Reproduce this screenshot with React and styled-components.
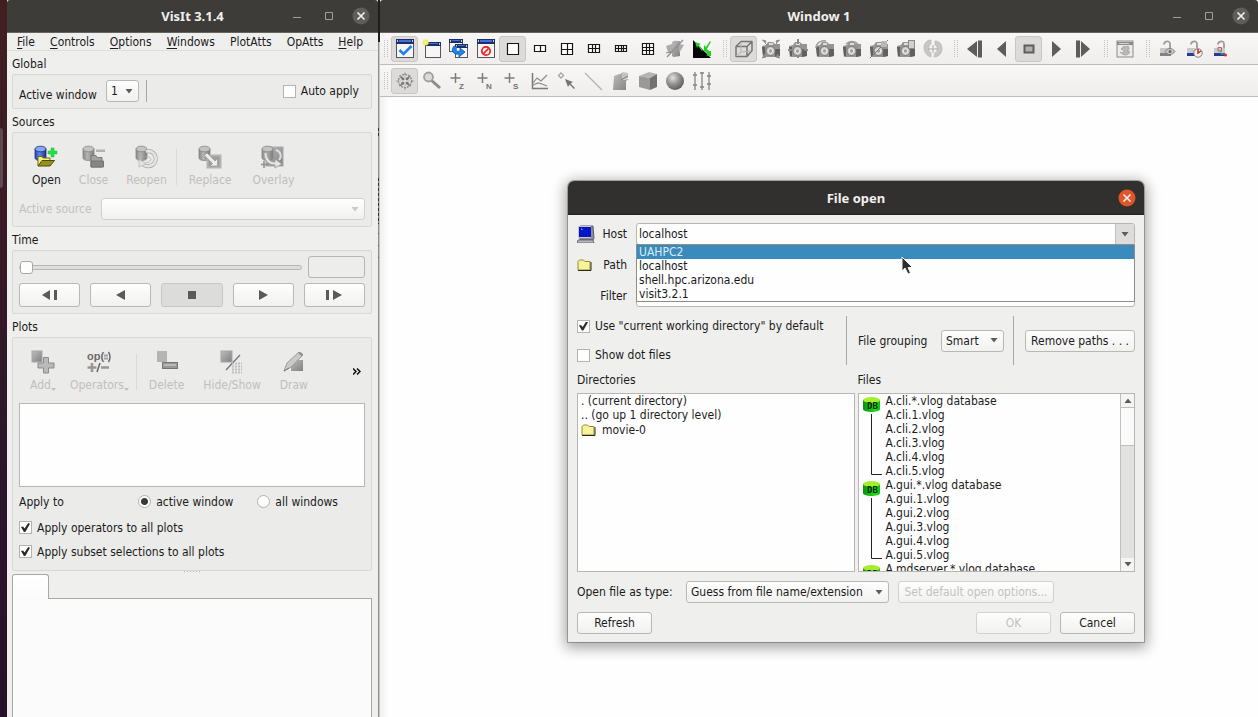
import React from 'react'
import styled, { createGlobalStyle, css } from 'styled-components';

const GlobalStyle = createGlobalStyle`
  * { box-sizing: border-box; }
  body {
    margin: 0;
    overflow: hidden;
    font-family: "DejaVu Sans Condensed", "DejaVu Sans", sans-serif;
    font-size: 12px;
    line-height: 14px;
    color: #1b1b1b;
  }
  button, input, select { font: inherit; color: inherit; margin: 0; }
  ul { list-style: none; margin: 0; padding: 0; }
  svg { display: block; flex: none; }
`;

/* ---------- desktop and window frames ---------- */

const Desktop = styled.div`
  display: flex;
  height: 100vh;
  background: #fefefe;
`;

const Launcher = styled.div`
  flex: 0 0 7px;
  background: linear-gradient(#40201f, #3a1a26 30%, #2b172b 60%, #25122a);
`;

const LauncherMark = styled.div`
  width: 3px;
  height: 60px;
  margin-top: 128px;
  border-radius: 0 3px 3px 0;
  background: #5f4650;
`;

const ControlWindow = styled.section`
  flex: 0 0 371px;
  min-width: 0;
  display: flex;
  flex-direction: column;
  background: #efefee;
`;

const WindowEdge = styled.div`
  flex: 0 0 2px;
  background:
    repeating-linear-gradient(#333 0 3px, transparent 3px 5px) 0 128px / 1px 9px no-repeat,
    repeating-linear-gradient(#333 0 3px, transparent 3px 5px) 0 178px / 1px 46px no-repeat,
    repeating-linear-gradient(#555 0 1px, transparent 1px 12px) 0 233px / 1px 36px no-repeat,
    linear-gradient(#1f1e1c 0 42px, transparent 42px),
    linear-gradient(90deg, #8e8e8c 0 1px, #c8c8c5 1px);
`;

const ViewWindow = styled.section`
  flex: 1;
  min-width: 0;
  display: flex;
  flex-direction: column;
  position: relative;
`;

const Canvas = styled.div`
  flex: 1;
  background: linear-gradient(90deg, #f1f0ee, #fefefe 9px);
`;

const TitleBar = styled.header`
  flex: none;
  display: grid;
  grid-template-columns: 1fr auto 1fr;
  align-items: center;
  height: ${p => (p.$dialog ? 34 : 33)}px;
  padding: 0 1px;
  background: ${p => (p.$dialog ? '#31302e' : '#3d3c39')};
  border-bottom: 1px solid ${p => (p.$dialog ? '#232220' : '#66645f')};
  border-radius: ${p => (p.$dialog ? '6px 6px 0 0' : '3px 3px 0 0')};
`;

const Title = styled.h1`
  grid-column: 2;
  margin: 0;
  font-family: "Noto Sans", sans-serif;
  font-size: 13px;
  line-height: 18px;
  font-weight: 700;
  color: #f1f0ee;
`;

const TitleButtons = styled.div`
  display: flex;
  justify-content: flex-end;
`;

const TitleButton = styled.button`
  width: 32px;
  height: 26px;
  padding: 0;
  border: 0;
  background: none;
  display: grid;
  place-items: center;
`;

/* ---------- shared controls ---------- */

const face = css`
  border: 1px solid ${p => (p.disabled ? '#d2d1cf' : '#b9b8b5')};
  border-radius: 3px;
  background: linear-gradient(#fefefe, #f1f1f0);
`;

const PushButton = styled.button`
  ${face}
  height: 22px;
  min-width: ${p => p.$min || 0}px;
  padding: 0 4px;
  white-space: nowrap;
  color: ${p => (p.disabled ? '#c3c2c0' : '#1b1b1b')};
`;

const SelectBox = styled.span`
  display: inline-grid;
  align-items: center;
  flex: ${p => (p.$grow ? 1 : 'none')};
  width: ${p => (p.$width ? p.$width + 'px' : 'auto')};
  > * { grid-area: 1 / 1; }
  > svg { justify-self: end; margin-right: 6px; pointer-events: none; }
`;

const Select = styled.select`
  ${face}
  appearance: none;
  width: 100%;
  height: 22px;
  padding: 0 4px;
  opacity: 1;
`;

const Check = styled.input.attrs({ type: 'checkbox' })`
  appearance: none;
  flex: none;
  width: 13px;
  height: 13px;
  border: 1px solid #b4b3b0;
  background: #fefefe;
  display: grid;
  place-items: center;
  &:checked::before {
    content: '';
    width: 9px;
    height: 9px;
    background: #2c2c2c;
    clip-path: polygon(0 45%, 22% 38%, 40% 62%, 80% 0, 100% 8%, 48% 100%, 32% 100%);
  }
`;

const Radio = styled.input.attrs({ type: 'radio' })`
  appearance: none;
  flex: none;
  width: 13px;
  height: 13px;
  border: 1px solid #b4b3b0;
  border-radius: 50%;
  background: #fefefe;
  &:checked { background: radial-gradient(circle, #3a3a3a 0 3px, #fefefe 4px); }
`;

const Option = styled.label`
  display: flex;
  align-items: center;
  gap: 5px;
  white-space: nowrap;
`;

const VLine = styled.div`
  width: 1px;
  height: ${p => p.$h}px;
  background: ${p => p.$color || '#a9a8a5'};
`;

const Row = styled.div`
  display: flex;
  align-items: center;
  gap: ${p => p.$gap || 0}px;
  height: ${p => (p.$h ? p.$h + 'px' : 'auto')};
  padding-right: ${p => p.$end || 0}px;
`;

const Spacer = styled.div`
  flex: 1;
`;

const FieldLabel = styled.label`
  min-width: ${p => p.$min || 0}px;
  align-self: ${p => (p.$low ? 'flex-end' : 'auto')};
  color: ${p => (p.$off ? '#c3c2c0' : '#1b1b1b')};
  white-space: nowrap;
`;

/* ---------- control window ---------- */

const MenuBar = styled.nav`
  display: flex;
  justify-content: space-between;
  height: 18px;
  padding: 0 8px 0 3px;
  border-bottom: 1px solid #dededc;
`;

const MenuItem = styled.button`
  padding: 0 7px;
  border: 0;
  background: none;
  line-height: 16px;
`;

const Mnemonic = styled.span`
  text-decoration: underline;
  text-underline-offset: 2px;
`;

const Body = styled.div`
  flex: 1;
  min-height: 0;
  display: flex;
  flex-direction: column;
  padding: 6px 6px 0 5px;
`;

const GroupTitle = styled.h2`
  margin: 0 0 3px;
  font-size: 12px;
  font-weight: 400;
  line-height: 14px;
`;

const Group = styled.div`
  margin-bottom: ${p => (p.$last ? 0 : 6)}px;
  padding: 5px 6px 6px;
  border: 1px solid #d8d8d6;
  border-radius: 2px;
  background: #ebebea;
`;

const ToolStrip = styled.div`
  display: flex;
  align-items: center;
  padding: 7px 4px 10px;
`;

const Tool = styled.button`
  display: flex;
  flex-direction: column;
  align-items: center;
  gap: 3px;
  padding: 0 ${p => p.$pad || 9}px;
  border: 0;
  background: none;
  color: ${p => (p.disabled ? '#c0bfbd' : '#1b1b1b')};
`;

const ToolLabel = styled.span`
  display: flex;
  align-items: flex-end;
  line-height: 16px;
  white-space: nowrap;
`;

const More = styled.button`
  border: 0;
  padding: 0;
  margin-left: auto;
  background: none;
  display: grid;
`;

const Slider = styled.input.attrs({ type: 'range' })`
  appearance: none;
  flex: 1;
  min-width: 0;
  height: 22px;
  background: none;
  &::-webkit-slider-runnable-track {
    height: 5px;
    border: 1px solid #b7b6b3;
    border-radius: 3px;
    background: #dededc;
  }
  &::-webkit-slider-thumb {
    appearance: none;
    width: 13px;
    height: 13px;
    margin-top: -5px;
    border: 1px solid #a9a8a5;
    border-radius: 3px;
    background: #fdfdfd;
  }
`;

const TimeField = styled.input`
  width: 57px;
  height: 22px;
  border: 1px solid #b7b6b3;
  border-radius: 3px;
  background: #ededec;
`;

const PlayerGrid = styled.div`
  display: grid;
  grid-template-columns: repeat(5, 1fr);
  gap: 10px;
  margin-top: 5px;
`;

const PlayerButton = styled.button`
  ${face}
  height: 24px;
  padding: 0;
  display: grid;
  place-items: center;
  ${p => p.$pressed && 'background: #dcdcda; border-color: #c9c8c6;'}
`;

const PlotList = styled.div`
  height: 84px;
  border: 1px solid #b7b6b3;
  background: #fefefe;
`;

const Splitter = styled.div`
  align-self: center;
  width: 16px;
  height: 1px;
  background: repeating-linear-gradient(90deg, #b5b5b3 0 1px, transparent 1px 3px);
`;

const Tab = styled.button`
  width: 37px;
  height: 25px;
  flex: none;
  margin-top: 2px;
  margin-bottom: -1px;
  z-index: 1;
  border: 1px solid #a9a8a5;
  border-bottom: 0;
  border-radius: 3px 3px 0 0;
  background: linear-gradient(#fff, #fbfbfb);
`;

const TabPanel = styled.div`
  flex: 1;
  border: 1px solid #a9a8a5;
  border-bottom: 0;
  background: #fbfbfb;
`;

/* ---------- view window toolbars ---------- */

const ToolBar = styled.div`
  display: flex;
  align-items: center;
  height: 32px;
  padding-left: 4px;
  background: linear-gradient(#f8f7f6, #efeeed);
  border-bottom: 1px solid #bdbcba;
`;

const ToolGroup = styled.div`
  display: flex;
  align-items: center;
  margin-right: 8px;
`;

const Grip = styled.div`
  width: 4px;
  height: 17px;
  margin-right: 3px;
  border: dotted #c2c1bf;
  border-width: 0 1px;
`;

const IconButton = styled.button`
  width: 27px;
  height: 26px;
  padding: 0;
  display: grid;
  place-items: center;
  border: 1px solid ${p => (p.$on ? '#c8c7c5' : 'transparent')};
  border-radius: 3px;
  background: ${p => (p.$on ? '#dcdbd9' : 'none')};
`;

/* ---------- file open dialog ---------- */

const Dialog = styled.section`
  position: absolute;
  left: 188px;
  top: 181px;
  width: 576px;
  border-radius: 6px 6px 0 0;
  background: #efefee;
  box-shadow: 0 0 0 1px rgba(0, 0, 0, 0.25), 0 3px 14px 3px rgba(0, 0, 0, 0.35);
`;

const DialogBody = styled.div`
  padding: 8px 9px;
`;

const DialogFoot = styled.div`
  display: grid;
  row-gap: 9px;
  margin-top: 9px;
`;

const Fields = styled.div`
  display: grid;
  grid-template-columns: 20px 35px 1fr;
  column-gap: 2px;
  row-gap: 9px;
  align-items: center;
  > label { text-align: right; padding-right: 7px; }
`;

const Combo = styled.div`
  display: flex;
  height: 22px;
  border: 1px solid #b7b6b3;
  border-radius: 3px;
  background: #fefefe;
  overflow: hidden;
`;

const ComboInput = styled.input`
  flex: 1;
  min-width: 0;
  border: 0;
  padding: 0 2px;
  background: none;
  outline: none;
`;

const ComboButton = styled.button`
  width: 19px;
  padding: 0;
  border: 0;
  border-left: 1px solid #c0bfbd;
  background: #dddcda;
  display: grid;
  place-items: center;
`;

const HostCell = styled.div`
  position: relative;
`;

const Popup = styled.ul`
  position: absolute;
  z-index: 2;
  left: 0;
  right: 0;
  top: 21px;
  border: 1px solid #8e8d8a;
  background: #fefefe;
`;

const PopupItem = styled.li`
  padding: 0 2px;
  line-height: 14px;
  color: ${p => (p.$active ? '#dcebf5' : '#1b1b1b')};
  background: ${p => (p.$active ? '#398abd' : 'none')};
`;

const Pointer = styled.svg`
  position: absolute;
  z-index: 3;
  left: 333px;
  top: 75px;
`;

const OptionsRow = styled.div`
  display: flex;
  align-items: center;
  margin-top: 9px;
  height: 49px;
`;

const Checks = styled.div`
  display: grid;
  row-gap: 15px;
  flex: 1;
`;

const Lists = styled.div`
  display: grid;
  grid-template-columns: 1fr 1fr;
  column-gap: 3px;
  margin-top: 8px;
`;

const ListTitle = styled(GroupTitle)`
  margin-bottom: 6px;
`;

const ListPane = styled.div`
  display: flex;
  height: 179px;
  border: 1px solid #b7b6b3;
  background: #fefefe;
  overflow: hidden;
`;

const DirList = styled.ul`
  padding: 0 3px;
`;

const DirItem = styled.li`
  display: flex;
  align-items: center;
  gap: 6px;
  height: ${p => (p.$icon ? 16 : 14)}px;
`;

const FileList = styled.ul`
  flex: 1;
  padding: 0 4px;
`;

const FileSet = styled.li`
  display: grid;
  grid-template-columns: 23px 1fr;
`;

const ScrollBar = styled.div`
  display: flex;
  flex-direction: column;
  width: 14px;
  border-left: 1px solid #c0bfbd;
  background: #e2e2e1;
`;

const ScrollButton = styled.button`
  height: 13px;
  padding: 0;
  border: 0;
  background: #f5f5f4;
  display: grid;
  place-items: center;
`;

const ScrollThumb = styled.div`
  height: 39px;
  border: solid #c0bfbd;
  border-width: 1px 0;
  background: #fafafa;
`;

/* ---------- icons ---------- */

const Icon = ({ size = 20, children }) => (
  <svg width={size} height={size} viewBox={`0 0 ${size} ${size}`} fill="none" aria-hidden="true">{children}</svg>
)

const Arrow = ({ color = '#5c5c5a', up }) => (
  <svg width="8" height="5" viewBox="0 0 8 5"><path d={up ? 'M0.500 5h7L4 .5z' : 'M.5 0h7L4 4.500z'} fill={color} /></svg>
)

const CloseIcon = ({ color = '#5f5e5b' }) => (
  <Icon size={18}>
    <circle cx="9" cy="9" r="8.5" fill={color} />
    <path d="M5.5 5.5l7 7M12.5 5.5l-7 7" stroke="#f4f3f1" strokeWidth="1.6" />
  </Icon>
)

const Shades = () => (
  <HiddenSvg width="0" height="0" aria-hidden="true">
    <defs>
      <linearGradient id="grey" x1="0" y1="0" x2="1" y2="1"><stop offset="0" stopColor="#bdbdbd" /><stop offset="1" stopColor="#808080" /></linearGradient>
      <linearGradient id="blue" x1="0" x2="1"><stop offset="0" stopColor="#2745b0" /><stop offset=".4" stopColor="#5b86ee" /><stop offset="1" stopColor="#1c338c" /></linearGradient>
      <linearGradient id="cyl" x1="0" x2="1"><stop offset="0" stopColor="#8a8a8a" /><stop offset=".4" stopColor="#b5b5b5" /><stop offset="1" stopColor="#7c7c7c" /></linearGradient>
      <linearGradient id="green" x1="0" x2="1"><stop offset="0" stopColor="#0b8f0b" /><stop offset=".7" stopColor="#1be01b" /><stop offset="1" stopColor="#10c010" /></linearGradient>
      <radialGradient id="ball" cx=".38" cy=".32" r=".7"><stop offset="0" stopColor="#e2e2e2" /><stop offset=".5" stopColor="#959595" /><stop offset="1" stopColor="#5d5d5d" /></radialGradient>
    </defs>
  </HiddenSvg>
)

const HiddenSvg = styled.svg`
  position: absolute;
`;

const Cylinder = ({ fill = 'url(#cyl)', top = '#c4c4c4', line = '#858585' }) => (
  <g stroke={line} strokeWidth=".8">
    <path d="M1 4v9c0 1.600 2.500 2.500 5.500 2.500s5.500-.9 5.500-2.500V4z" fill={fill} />
    <ellipse cx="6.500" cy="4" rx="5.500" ry="2.800" fill={top} />
  </g>
)

const OpenIcon = () => (
  <Icon size={24}>
    <Cylinder fill="url(#blue)" top="#88a7f5" line="#1d2f78" />
    <path d="M17 3h3v3h3v3h-3v3h-3V9h-3V6h3z" fill="#28e046" stroke="#17b832" strokeWidth=".5" />
    <path d="M4 21V11.500h4l1 1.500h7v2.500" fill="#f7f27a" stroke="#6e6a12" />
    <path d="M4 21l4-5.500h12.500L16 21z" fill="#97911a" stroke="#4c490a" />
  </Icon>
)

const CloseDbIcon = () => (
  <Icon size={24}>
    <Cylinder />
    <rect x="14" y="4.500" width="9" height="2.500" fill="#b2b2b2" />
    <path d="M9 22V10.500h5l1 2h5V22z" fill="#a3a3a3" stroke="#7b7b7b" />
    <path d="M9 22v-6h12.500v6z" fill="#868686" stroke="#757575" />
  </Icon>
)

const ReopenIcon = () => (
  <Icon size={24}>
    <Cylinder />
    <path d="M11 6.500a7.500 7.500 0 1 1-3 12.500" stroke="#a9a9a9" strokeWidth="4.200" />
    <path d="M11 6.500a7.500 7.500 0 1 1-3 12.500" stroke="#e4e4e4" strokeWidth="2.800" />
    <path d="M4 22v-8l7 5z" fill="#e4e4e4" stroke="#b0b0b0" strokeWidth=".7" />
    <path d="M11 12a3 3 0 1 1 0 5" stroke="#bdbdbd" />
  </Icon>
)

const ReplaceIcon = () => (
  <Icon size={24}>
    <Cylinder />
    <rect x="9.500" y="10.500" width="13" height="12" fill="#9d9d9d" stroke="#b4b4b4" strokeWidth="2" />
    <path d="M9 8l8 8 2.500-2.500V21H12l2.500-2.500-8-8z" fill="#ececec" stroke="#989898" strokeWidth=".7" />
  </Icon>
)

const OverlayIcon = () => (
  <Icon size={24}>
    <rect x="5" y="2" width="17" height="19" fill="url(#grey)" stroke="#aaa" />
    <Cylinder />
    <path d="M6 7c0 7 3 10 8 10v-3l7 5-7 4v-3C6 20 3 14 3 8z" fill="#e4e4e4" stroke="#929292" strokeWidth=".7" />
    <path d="M15 5a6 6 0 0 1 3 10" stroke="#ddd" strokeWidth="2" />
    <path d="M3 16v7M0 19.500h7" stroke="#909090" strokeWidth="1.500" />
  </Icon>
)

const AddIcon = () => (
  <Icon size={24}>
    <rect x="1" y="1" width="10" height="11" fill="url(#grey)" stroke="#a8a8a8" />
    <path d="M12.500 7.500h5v5.500h5.500v5h-5.500v5h-5v-5H7v-5h5.500z" fill="#bababa" stroke="#8b8b8b" />
  </Icon>
)

const OperatorsIcon = () => (
  <svg width="26" height="24" viewBox="0 0 26 24" aria-hidden="true" fill="none">
    <text x="1" y="10" fontFamily="Liberation Sans" fontSize="11" fontWeight="700" fill="#6c6c6c">op(</text>
    <path d="M18 5.500h4M18 8.500h4" stroke="#a0a0a0" strokeWidth="2" />
    <path d="M22.500 2q3 5 0 10" stroke="#6c6c6c" strokeWidth="1.500" />
    <path d="M6 13v9M1.500 17.500h9M15 17.500h8" stroke="#979797" strokeWidth="2.600" />
    <path d="M14 13l-3 9" stroke="#666" strokeWidth="1.500" />
  </svg>
)

const DeleteIcon = () => (
  <Icon size={24}>
    <rect x="2" y="1" width="10" height="11" fill="#b4b4b4" />
    <rect x="7.500" y="12.500" width="15" height="6" fill="#989898" stroke="#767676" />
    <path d="M9 15h12" stroke="#c4c4c4" strokeWidth="1.500" />
  </Icon>
)

const HideIcon = () => (
  <Icon size={24}>
    <rect x="1" y="1" width="11" height="11" fill="url(#grey)" stroke="#a8a8a8" />
    <path d="M20 5L6 20" stroke="#747474" strokeWidth="1.300" />
    <path d="M12 13.500h10M12 16.500h10M12 19.500h10M12 22.500h10" stroke="#bebebe" strokeWidth="2" strokeDasharray="2 1" />
  </Icon>
)

const DrawIcon = () => (
  <Icon size={24}>
    <rect x="9" y="10" width="12" height="11" fill="url(#grey)" />
    <path d="M2 21l3-8L17 2l4 3L9 17z" fill="#cacaca" stroke="#9c9c9c" />
    <path d="M16 3l4 3 1-2-3-2z" fill="#8b8b8b" />
    <path d="M2 21l5-3" stroke="#777" />
  </Icon>
)

const Frame = ({ x = 1, y = 0, w = 17, h = 18, s = 4 }) => (
  <g>
    <rect x={x + .5} y={y + .5} width={w} height={h} fill="#f6f6f6" stroke="#55565e" />
    <rect x={x} y={y} width={w + 1} height={s + 1} fill="#1d2f63" />
    <rect x={x + 3} y={y + 1} width={w - 5} height={s - 2} fill="#3f6fe0" />
    <path d={`M${x + 1} ${y + 2}h1M${x + w - 1} ${y + 2}h1`} stroke="#fff" strokeWidth="1.500" />
  </g>
)

const viewIcons = {
  active: <Icon><Frame /><path d="M4.500 11l4 4 8-8" stroke="#1e80f0" strokeWidth="2.600" /></Icon>,
  fresh: <Icon><Frame x={3} y={3} w={15} h={15} s={3} /><circle cx="3.500" cy="3.500" r="3" fill="#f2ee4a" /><circle cx="3.500" cy="3.500" r="1" fill="#fff" /></Icon>,
  clone: <Icon><Frame x={0} y={0} w={13} h={12} s={3} /><Frame x={6} y={5} w={12} h={13} s={3} /><path d="M5 7c-4 5 0 9 5 8v3l6-5-5-4v3c-3 1-5 0-3-4z" fill="#1c86ee" stroke="#1054ad" strokeWidth=".8" /></Icon>,
  remove: <Icon><Frame /><circle cx="10" cy="12" r="4.200" stroke="#f01c1c" strokeWidth="1.700" /><path d="M7.500 14.500l5-5" stroke="#f01c1c" strokeWidth="1.700" /></Icon>,
  slash: <Icon><path d="M7 3c2-2 5-1 8-1v15c-3 0-6 2-8 0z" fill="url(#grey)" /><path d="M1 7l6-2v9l-4-1zM19 6l-5-1v9z" fill="#acacac" /><path d="M2 18L18 1M1 14l5-1" stroke="#8d8d8d" strokeWidth="1.200" /></Icon>,
  invert: <Icon><rect x="1" y="1" width="18" height="18" fill="#fff" /><path d="M1 1l18 18H1z" fill="#050505" /><path d="M3 3l2 6 1-2 4 5 1-1-4-5 2-1zM18 2l-4 6-2-2v6h5l-2-2 4-7M13 12l3 4-2 1h5v-5" fill="#27cf27" /></Icon>,
  box: <Icon><path d="M2 7.500h11v10H2zM2 7.500l5-5h11l-5 5M18 2.500v9l-5 6" stroke="#757575" strokeWidth="1.500" strokeLinejoin="round" /><path d="M7 3v10l10-1M7 13l-5 4" stroke="#b5b5b5" /></Icon>,
}

const Grid = ({ cols, rows, w, h }) => {
  const x = Math.round((20 - w) / 2) - .5
  const y = Math.round((20 - h) / 2) - .5
  let d = `M${x} ${y}h${w}v${h}h${-w}z`
  for (let i = 1; i < cols; i++) d += `M${x + Math.round((w * i) / cols)} ${y}v${h}`
  for (let i = 1; i < rows; i++) d += `M${x} ${y + Math.round((h * i) / rows)}h${w}`
  return <Icon><path d={d} stroke="#161616" strokeWidth="1.200" fill="#fff" /></Icon>
}

const Camera = ({ children }) => (
  <Icon>
    <path d="M1 7l4-1 2-3h5l2 2h5v12l-5 1H2z" fill="#949494" />
    <path d="M1 8h3v9H2zM14 10h5v7l-5 1z" fill="#606060" />
    <path d="M8 4h4v2H8z" fill="#ddd" />
    <circle cx="9.500" cy="12" r="4.500" fill="#d0d0d0" stroke="#777" />
    <circle cx="9.500" cy="12" r="2.200" fill="#a0a0a0" stroke="#ececec" />
    {children}
  </Icon>
)

const cameras = [
  ['Reset view', <Camera><path d="M1 1l4 1-1 2 3 3M19 1l-4 1 1 2-3 3M1 19l4-1-2-3M19 19l-4-1 2-3" fill="#8b8b8b" stroke="#8b8b8b" /></Camera>],
  ['Recenter view', <Camera><path d="M10 0v5M10 19v-3M0 11h4M20 11h-4" stroke="#8a8a8a" strokeWidth="2" /></Camera>],
  ['Undo view', <Camera><path d="M1 9c0-5 5-8 10-7" stroke="#9b9b9b" strokeWidth="1.500" /></Camera>],
  ['Redo view', <Camera><path d="M4 5c5-5 13-2 14 5" stroke="#9b9b9b" strokeWidth="1.500" /></Camera>],
  ['Lock view', <Camera><path d="M1 19L19 1" stroke="#777" /><rect x="12" y="2" width="6" height="6" fill="#b8b8b8" /></Camera>],
  ['Save view', <Camera><rect x="12.500" y="1.500" width="6" height="8" fill="#d0d0d0" stroke="#8a8a8a" /></Camera>],
]

const spin = (
  <Icon>
    <path d="M8 1C3 1 1 5 1 9s3 8 7 9v-4c-3-1-3-8 0-9zM12 2c5 0 7 4 7 8s-3 8-8 8l1-4c3-1 3-7 0-8z" fill="#c6c6c6" stroke="#b4b4b4" strokeWidth=".7" />
    <path d="M10 6v8M5 10h10" stroke="#a9a9a9" />
  </Icon>
)

const playIcons = {
  stepBack: <Icon><path d="M12 2v16L2 10zM13 1.500h4v17h-4z" fill="#5d5d5b" /><path d="M12.500 1v18" stroke="#efeeed" /></Icon>,
  back: <Icon><path d="M14 2v16L5 10z" fill="#5d5d5b" /></Icon>,
  stop: <Icon><path d="M5.500 6.500h9v7h-9z" stroke="#5d5d5b" strokeWidth="2" fill="#b0b0ae" /></Icon>,
  play: <Icon><path d="M6 2v16l9-8z" fill="#5d5d5b" /></Icon>,
  stepOn: <Icon><path d="M8 2v16l9-8zM3 1.500h4v17H3z" fill="#5d5d5b" /><path d="M7.500 1v18" stroke="#efeeed" /></Icon>,
}

const timeWindow = (
  <Icon>
    <rect x="2" y="2" width="16" height="16" fill="#ececec" stroke="#8b8b8b" />
    <path d="M2 4.500h16" stroke="#8b8b8b" strokeWidth="3" />
    <path d="M4 4.500h10" stroke="#d5d5d5" />
    <path d="M9 7l-3 3 3 2c0 2-2 2-4 1 3 4 8 4 10 0l-3-1c2 0 3-3 1-5l-3 1z" fill="#b9b9b9" stroke="#9a9a9a" strokeWidth=".7" />
  </Icon>
)

const Lock = ({ base, children }) => (
  <Icon>
    <path d="M7 5.500C7 2 13 1 13 5v5" stroke="#9c9c9c" strokeWidth="1.800" />
    <rect x="3" y="9" width="11" height="7" fill="#c9c9cc" />
    <rect x="3" y="14" width="11" height="3" fill={base} />
    {children}
  </Icon>
)

const locks = {
  view: <Lock base="#828282"><path d="M8 12.500c3-4 7-4 10 0-3 4-7 4-10 0z" fill="#c9c9c9" stroke="#7d7d7d" /><circle cx="13" cy="12.500" r="1.500" fill="#6a6a6a" /></Lock>,
  time: <Lock base="#26399b"><circle cx="14" cy="14" r="4.200" fill="#f4f4f4" stroke="#7d7d7d" /><path d="M14 10v4l3-2" stroke="#d91f1f" strokeWidth="1.500" /></Lock>,
  tools: <Lock base="#26399b"><path d="M7 8.500h3.500V12H7z" stroke="#d35a5a" /><path d="M10 11v4h4" stroke="#37b877" /><circle cx="14.500" cy="16" r="1.500" fill="#e3222d" /></Lock>,
}

const axisIcon = letter => (
  <Icon>
    <path d="M6.500 2v10M1.500 7h10" stroke="#7e7e7e" strokeWidth="1.500" />
    <text x="10" y="18" fontFamily="Liberation Sans" fontSize="8" fontWeight="700" fill="#717171">{letter}</text>
  </Icon>
)

const modeIcons = [
  ['Navigate', <Icon><path d="M10 0l1 7 5-3-3 5 7 1-7 1 3 5-5-3-1 7-1-7-5 3 3-5-7-1 7-1-3-5 5 3z" fill="#777" /><circle cx="10" cy="10" r="6.500" stroke="#8c8c8c" strokeWidth="1.500" strokeDasharray="2 1" /><path d="M10 4v12M4 10h12" stroke="#e8e8e8" strokeWidth="1.300" /></Icon>],
  ['Zoom', <Icon><path d="M9 9l9 8" stroke="#8b8b8b" strokeWidth="3" /><circle cx="6.500" cy="6" r="4.500" fill="#dadada" stroke="#a0a0a0" strokeWidth="1.800" /></Icon>],
  ['Zone pick', axisIcon('Z')],
  ['Node pick', axisIcon('N')],
  ['Spreadsheet pick', axisIcon('S')],
  ['Lineout', <Icon><path d="M2.500 2v15.500H18" stroke="#7a7a7a" strokeWidth="1.500" /><path d="M3 12l4-5 4 3 6-6M3 14l5-2 4 1 5 2" stroke="#8b8b8b" strokeWidth="1.200" /></Icon>],
  ['Point tool', <Icon><path d="M4 2l2.500 2.500L4 7 1.500 4.500z" stroke="#a7a7a7" strokeWidth="1.400" /><path d="M8 8l8 3-2.500 1.500L18 17l-1 1-4.500-4.500L11 16z" fill="#737373" /></Icon>],
  ['Line tool', <Icon><path d="M1 2l17 17" stroke="#b5b5b5" strokeWidth="1.500" /></Icon>],
  ['Plane tool', <Icon><path d="M3 5l8-3v7l7-1-3 2v9H2z" fill="url(#grey)" /><path d="M11 1v8l6-2V2z" fill="#c4c4c4" /><path d="M10 9l7-4" stroke="#777" /></Icon>],
  ['Box tool', <Icon><path d="M1 5l10-4 8 2-7 4z" fill="#b5b5b5" /><path d="M1 5l11 2v12L1 16z" fill="#999" /><path d="M12 7l7-4v13l-7 3z" fill="#727272" /></Icon>],
  ['Sphere tool', <Icon><circle cx="10" cy="10" r="9" fill="url(#ball)" /></Icon>],
  ['Axis restriction', <Icon><path d="M3 1v18M10 1v18M17 1v18" stroke="#858585" strokeWidth="1.300" /><path d="M1 4h4M1 14h4M8 16h4M8 2h4M15 5h4M15 13h4" stroke="#858585" strokeWidth="1.500" /></Icon>],
]

const HostIcon = () => (
  <Icon size={18}>
    <path d="M3 1h13l1 12-1 2H3z" fill="#8d8d96" stroke="#5e5e68" />
    <rect x="1" y="1" width="13" height="12" fill="#c6c6cd" />
    <rect x="2" y="2" width="12" height="10" fill="#0713c6" />
    <path d="M4 4h1v1" stroke="#6ed1ff" />
    <path d="M1 15h15l1 3H0z" fill="#babac2" stroke="#55555e" strokeWidth=".8" />
  </Icon>
)

const FolderIcon = () => (
  <svg width="15" height="12" viewBox="0 0 15 12">
    <path d="M1 11V2.500L2.500 1h4L8 2.500h5V11z" fill="#f8f29b" stroke="#938c35" />
    <path d="M1 11.500h13V3" stroke="#2b2a14" fill="none" />
  </svg>
)

/* database drum with the bracket that ties its time states together */
const DbTree = ({ rows }) => (
  <svg width="23" height={rows * 14} viewBox={`0 0 23 ${rows * 14}`} fill="none">
    <path d="M0 6v9c0 4 17 4 17 0V6z" fill="url(#green)" />
    <ellipse cx="8.500" cy="6" rx="8.500" ry="3" fill="#a5ee2d" />
    <text x="4" y="15" fontFamily="DejaVu Sans Mono" fontSize="9" fontWeight="700" fill="#052505">DB</text>
    {rows > 1 && <path d={`M8.500 20V${rows * 14 - 4}.500H19`} stroke="#222" />}
  </svg>
)

/* ---------- data ---------- */

const menus = [['F', 'ile'], ['C', 'ontrols'], ['O', 'ptions'], ['W', 'indows'], ['', 'PlotAtts'], ['', 'OpAtts'], ['H', 'elp']]
const hosts = ['UAHPC2', 'localhost', 'shell.hpc.arizona.edu', 'visit3.2.1']
const fileSets = [{ name: 'A.cli', count: 5 }, { name: 'A.gui', count: 5 }, { name: 'A.mdserver', count: 0 }]

const layouts = [
  ['1x1', { cols: 1, rows: 1, w: 11, h: 11 }, true],
  ['1x2', { cols: 2, rows: 1, w: 11, h: 6 }],
  ['2x2', { cols: 2, rows: 2, w: 11, h: 11 }],
  ['2x3', { cols: 3, rows: 2, w: 11, h: 8 }],
  ['2x4', { cols: 4, rows: 2, w: 11, h: 6 }],
  ['3x3', { cols: 3, rows: 3, w: 11, h: 11 }],
]

const player = [
  ['Previous frame', 'M8 1v10L0 6zM12 1h3v10h-3z'],
  ['Reverse play', 'M12 1v10L3 6z'],
  ['Stop', 'M4 2h8v8H4z'],
  ['Play', 'M4 1v10l9-5z'],
  ['Next frame', 'M0 1h3v10H0zM7 1v10l9-5z'],
]

/* ---------- parts ---------- */

const WindowTitle = ({ children }) => (
  <TitleBar>
    <Title>{children}</Title>
    <TitleButtons>
      <TitleButton aria-label="Minimize"><Icon size={18}><path d="M5 10.500h8" stroke="#a09f9b" /></Icon></TitleButton>
      <TitleButton aria-label="Maximize"><Icon size={18}><path d="M5.500 5.500h7v7h-7z" stroke="#a09f9b" /></Icon></TitleButton>
      <TitleButton aria-label="Close"><CloseIcon /></TitleButton>
    </TitleButtons>
  </TitleBar>
)

const BigTool = ({ icon, label, off, menu, pad }) => (
  <Tool disabled={off} $pad={pad}>
    {icon}
    <ToolLabel>{label}{menu && <svg width="5" height="6" viewBox="0 0 5 6"><path d="M0 1h5L2.500 4z" fill="#c0bfbd" /></svg>}</ToolLabel>
  </Tool>
)

const Drop = ({ id, value, width, grow, disabled }) => (
  <SelectBox $width={width} $grow={grow}>
    <Select id={id} disabled={disabled}><option>{value}</option></Select>
    <Arrow color={disabled ? '#c9c8c6' : undefined} />
  </SelectBox>
)

const Strip = ({ items }) => (
  <ToolGroup>
    <Grip />
    {items.map(([label, icon, on]) => <IconButton key={label} aria-label={label} $on={on}>{icon}</IconButton>)}
  </ToolGroup>
)

const Controls = () => (
  <ControlWindow>
    <WindowTitle>VisIt 3.1.4</WindowTitle>
    <MenuBar>
      {menus.map(([key, rest]) => <MenuItem key={rest}>{key && <Mnemonic>{key}</Mnemonic>}{rest}</MenuItem>)}
    </MenuBar>
    <Body>
      <GroupTitle>Global</GroupTitle>
      <Group>
        <Row $gap={7} $h={22} $end={6}>
          <FieldLabel htmlFor="activeWindow" $min={80} $low>Active window</FieldLabel>
          <Drop id="activeWindow" value="1" width={33} />
          <VLine $h={22} />
          <Spacer />
          <Option><Check />Auto apply</Option>
        </Row>
      </Group>
      <GroupTitle>Sources</GroupTitle>
      <Group>
        <ToolStrip>
          <BigTool icon={<OpenIcon />} label="Open" />
          <BigTool icon={<CloseDbIcon />} label="Close" off />
          <BigTool icon={<ReopenIcon />} label="Reopen" off />
          <VLine $h={36} $color="#dadad8" />
          <BigTool icon={<ReplaceIcon />} label="Replace" off pad={12} />
          <BigTool icon={<OverlayIcon />} label="Overlay" off />
        </ToolStrip>
        <Row $gap={6}>
          <FieldLabel htmlFor="activeSource" $min={76} $off>Active source</FieldLabel>
          <Drop id="activeSource" value="" grow disabled />
        </Row>
      </Group>
      <GroupTitle>Time</GroupTitle>
      <Group>
        <Row $gap={6}>
          <Slider aria-label="Time" defaultValue={0} />
          <TimeField aria-label="Time state" />
        </Row>
        <PlayerGrid>
          {player.map(([label, d]) => (
            <PlayerButton key={label} aria-label={label} $pressed={label === 'Stop'}>
              <svg width="16" height="12" viewBox="0 0 16 12"><path d={d} fill="#5a5a58" /></svg>
            </PlayerButton>
          ))}
        </PlayerGrid>
      </Group>
      <GroupTitle>Plots</GroupTitle>
      <Group $last>
        <ToolStrip>
          <BigTool icon={<AddIcon />} label="Add" off menu pad={7} />
          <BigTool icon={<OperatorsIcon />} label="Operators" off menu pad={7} />
          <VLine $h={36} $color="#dadad8" />
          <BigTool icon={<DeleteIcon />} label="Delete" off pad={12} />
          <BigTool icon={<HideIcon />} label="Hide/Show" off pad={7} />
          <BigTool icon={<DrawIcon />} label="Draw" off pad={12} />
          <More aria-label="More"><svg width="8" height="7" viewBox="0 0 8 7"><path d="M0 .5l3 3-3 3M4 .5l3 3-3 3" stroke="#111" strokeWidth="1.500" fill="none" /></svg></More>
        </ToolStrip>
        <PlotList />
        <Row $h={29} $end={27}>
          <FieldLabel as="span">Apply to</FieldLabel>
          <Spacer />
          <Row $gap={24}>
            <Option><Radio name="applyTo" defaultChecked />active window</Option>
            <Option><Radio name="applyTo" />all windows</Option>
          </Row>
        </Row>
        <Row $h={23}><Option><Check defaultChecked />Apply operators to all plots</Option></Row>
        <Row $h={25}><Option><Check defaultChecked />Apply subset selections to all plots</Option></Row>
      </Group>
      <Splitter />
      <Tab aria-label="Notepad" />
      <TabPanel />
    </Body>
  </ControlWindow>
)

const FileOpen = () => (
  <Dialog role="dialog" aria-label="File open">
    <TitleBar $dialog>
      <Title>File open</Title>
      <TitleButtons><TitleButton aria-label="Close"><CloseIcon color="#e0562b" /></TitleButton></TitleButtons>
    </TitleBar>
    <DialogBody>
      <Fields>
        <HostIcon />
        <label htmlFor="host">Host</label>
        <HostCell>
          <Combo>
            <ComboInput id="host" defaultValue="localhost" />
            <ComboButton aria-label="Show hosts"><Arrow /></ComboButton>
          </Combo>
          <Popup role="listbox">
            {hosts.map((h, i) => <PopupItem key={h} role="option" $active={i === 0}>{h}</PopupItem>)}
          </Popup>
        </HostCell>
        <FolderIcon />
        <label htmlFor="path">Path</label>
        <Combo><ComboInput id="path" /></Combo>
        <span />
        <label htmlFor="filter">Filter</label>
        <Combo><ComboInput id="filter" /></Combo>
      </Fields>
      <OptionsRow>
        <Checks>
          <Option><Check defaultChecked />Use "current working directory" by default</Option>
          <Option><Check />Show dot files</Option>
        </Checks>
        <Row $gap={11}>
          <VLine $h={49} />
          <Row $gap={9}>
            <FieldLabel htmlFor="grouping" $min={74}>File grouping</FieldLabel>
            <Drop id="grouping" value="Smart" width={63} />
            <VLine $h={49} />
          </Row>
          <PushButton $min={110}>Remove paths . . .</PushButton>
        </Row>
      </OptionsRow>
      <Lists>
        <div>
          <ListTitle>Directories</ListTitle>
          <ListPane>
            <DirList>
              <DirItem>. (current directory)</DirItem>
              <DirItem>.. (go up 1 directory level)</DirItem>
              <DirItem $icon><FolderIcon />movie-0</DirItem>
            </DirList>
          </ListPane>
        </div>
        <div>
          <ListTitle>Files</ListTitle>
          <ListPane>
            <FileList>
              {fileSets.map(({ name, count }) => (
                <FileSet key={name}>
                  <DbTree rows={count + 1} />
                  <div>
                    <div>{name}.*.vlog database</div>
                    {Array.from({ length: count }, (_, i) => <div key={i}>{name}.{i + 1}.vlog</div>)}
                  </div>
                </FileSet>
              ))}
            </FileList>
            <ScrollBar>
              <ScrollButton aria-label="Scroll up"><Arrow up /></ScrollButton>
              <ScrollThumb />
              <Spacer />
              <ScrollButton aria-label="Scroll down"><Arrow /></ScrollButton>
            </ScrollBar>
          </ListPane>
        </div>
      </Lists>
      <DialogFoot>
        <Row $gap={9}>
          <FieldLabel htmlFor="fileType" $min={100}>Open file as type:</FieldLabel>
          <Drop id="fileType" value="Guess from file name/extension" width={203} />
          <PushButton $min={156} disabled>Set default open options...</PushButton>
        </Row>
        <Row $gap={9}>
          <PushButton $min={75}>Refresh</PushButton>
          <Spacer />
          <PushButton $min={75} disabled>OK</PushButton>
          <PushButton $min={75}>Cancel</PushButton>
        </Row>
      </DialogFoot>
    </DialogBody>
    <Pointer width="13" height="20" viewBox="0 0 13 20">
      <path d="M1 1v14l3-3 3 6 2.500-1-2.500-5.500h4.500z" fill="#2d2d2d" stroke="#f4f4f4" />
    </Pointer>
  </Dialog>
)

export default function App() {
  return (
    <Desktop>
      <GlobalStyle />
      <Shades />
      <Launcher><LauncherMark /></Launcher>
      <Controls />
      <WindowEdge />
      <ViewWindow>
        <WindowTitle>Window 1</WindowTitle>
        <ToolBar>
          <Strip items={[
            ['Active window', viewIcons.active, true],
            ['New window', viewIcons.fresh],
            ['Clone window', viewIcons.clone],
            ['Delete window', viewIcons.remove],
            ...layouts.map(([label, g, on]) => [label, <Grid {...g} />, on]),
            ['Spin', viewIcons.slash],
            ['Invert background', viewIcons.invert],
          ]} />
          <Strip items={[['Perspective', viewIcons.box, true], ...cameras, ['Choose center', spin]]} />
          <Strip items={[
            ['Previous frame', playIcons.stepBack],
            ['Reverse play', playIcons.back],
            ['Stop', playIcons.stop, true],
            ['Play', playIcons.play],
            ['Next frame', playIcons.stepOn],
          ]} />
          <Strip items={[['Copy', timeWindow]]} />
          <Strip items={[['Lock view', locks.view], ['Lock time', locks.time], ['Lock tools', locks.tools]]} />
        </ToolBar>
        <ToolBar>
          <Strip items={modeIcons.map(([label, icon], i) => [label, icon, i === 0])} />
        </ToolBar>
        <Canvas />
        <FileOpen />
      </ViewWindow>
    </Desktop>
  )
}
